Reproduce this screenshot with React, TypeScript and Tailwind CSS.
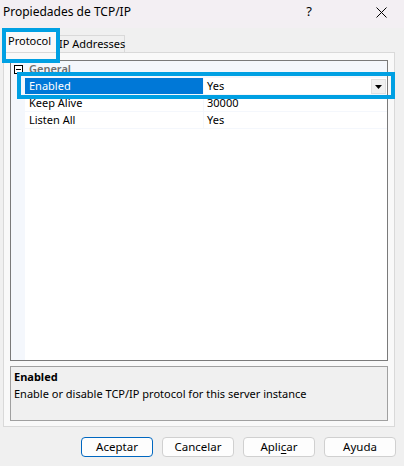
import React from "react";

const font = { fontFamily: '"Segoe UI", "Noto Sans", "Open Sans", sans-serif' };

function Row({ name, value, selected, dropdown }: { name: string; value: string; selected?: boolean; dropdown?: boolean }) {
  return (
    <div className="flex h-[17px] border-b border-[#f4f7fc]">
      <div className="w-[14px] bg-[#f4f7fc] shrink-0" />
      <div className={`w-[178px] shrink-0 pl-[4px] leading-[16px] ${selected ? "bg-[#0078d7] text-white" : "text-black"}`}>{name}</div>
      <div className="w-px bg-[#f4f7fc] shrink-0" />
      <div className="flex-1 flex items-center pl-[3px] leading-[16px] text-black relative">
        <span>{value}</span>
        {dropdown && (
          <div className="absolute right-[1px] top-[1px] w-[15px] h-[15px] bg-[#f0f0f0] border border-[#e0e0e0] flex items-center justify-center">
            <svg width="7" height="4" viewBox="0 0 7 4"><path d="M0 0h7L3.5 4z" fill="#000" /></svg>
          </div>
        )}
      </div>
    </div>
  );
}

function Btn({ label, primary }: { label: React.ReactNode; primary?: boolean }) {
  return (
    <div className={`w-[72px] h-[20px] rounded-[4px] bg-[#fdfdfd] border flex items-center justify-center text-[11.5px] text-black ${primary ? "border-[#0067c0]" : "border-[#d0d0d0]"}`}>
      {label}
    </div>
  );
}

export default function App() {
  return (
    <div className="w-[404px] h-[466px] bg-[#f0f0f0] relative overflow-hidden text-[11px]" style={font}>
      {/* title bar */}
      <div className="h-[28px] bg-[#f3eff3] flex items-center pl-[3px] text-[12px] text-black">
        <span className="mt-[-4px]">Propiedades de TCP/IP</span>
        <span className="ml-auto mr-[64px] mt-[-4px] text-[13px]">?</span>
        <svg className="mr-[17px] mt-[-4px]" width="11" height="11" viewBox="0 0 11 11"><path d="M0.5 0.5L10.5 10.5M10.5 0.5L0.5 10.5" stroke="#000" strokeWidth="1" /></svg>
      </div>

      {/* tabs */}
      <div className="pl-[3px] pr-[9px]">
        <div className="flex items-end h-[24px]">
          <div className="h-[24px] w-[54px] bg-[#f9f9f9] border border-b-0 border-[#d9d9d9] pl-[4px] pt-[4px] text-black relative z-10 whitespace-nowrap">Protocol</div>
          <div className="h-[17px] w-[68px] bg-[#f0f0f0] border border-l-0 border-[#d9d9d9] border-b-0 pl-[2px] leading-[16px] text-black whitespace-nowrap">IP Addresses</div>
        </div>
        <div className="h-[375px] border border-[#d9d9d9] bg-[#f9f9f9] pt-[7px] px-[6px]">
          {/* property grid */}
          <div className="h-[301px] border border-[#7a7a7a] bg-white flex flex-col">
            <div className="flex h-[17px] bg-[#f4f7fc] items-center">
              <div className="w-[14px] flex items-center justify-center">
                <div className="w-[9px] h-[9px] border border-black bg-white flex items-center justify-center">
                  <div className="w-[5px] h-px bg-black" />
                </div>
              </div>
              <span className="pl-[4px] text-[#6d6d6d] font-semibold">General</span>
            </div>
            <Row name="Enabled" value="Yes" selected dropdown />
            <Row name="Keep Alive" value="30000" />
            <Row name="Listen All" value="Yes" />
            <div className="flex-1 flex">
              <div className="w-[14px] bg-[#f4f7fc]" />
            </div>
          </div>
          {/* description */}
          <div className="mt-[5px] h-[55px] border border-[#a0a0a0] bg-[#f0f0f0] px-[3px] pt-[2px] text-black">
            <div className="font-bold leading-[16px]">Enabled</div>
            <div className="leading-[16px] mt-[1px]">Enable or disable TCP/IP protocol for this server instance</div>
          </div>
        </div>
      </div>

      {/* buttons */}
      <div className="flex justify-end gap-[9px] pr-[8px] mt-[10px]">
        <Btn label="Aceptar" primary />
        <Btn label="Cancelar" />
        <Btn label={<span>Apli<u className="underline underline-offset-2">c</u>ar</span>} />
        <Btn label="Ayuda" />
      </div>

      {/* highlight overlays */}
      <div className="absolute left-[2px] top-[28px] w-[58px] h-[35px] border-[4px] border-[#00a0e3] z-20" />
      <div className="absolute left-[17px] top-[72px] w-[378px] h-[27px] border-[4px] border-[#00a0e3] z-20" />
    </div>
  );
}
